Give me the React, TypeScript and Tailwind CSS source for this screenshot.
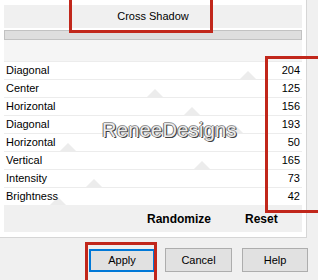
import React from "react";

const rows = [
  { label: "Diagonal", value: 204 },
  { label: "Center", value: 125 },
  { label: "Horizontal", value: 156 },
  { label: "Diagonal", value: 193 },
  { label: "Horizontal", value: 50 },
  { label: "Vertical", value: 165 },
  { label: "Intensity", value: 73 },
  { label: "Brightness", value: 42 },
];

const Thumb = ({ value }: { value: number }) => {
  // faint slider thumb behind each row
  const left = 9 + value * 1.17 - 4 - 8;
  return (
    <svg className="absolute bottom-0" style={{ left }} width="16" height="8" viewBox="0 0 16 8">
      <polygon points="0,8 8,0 16,8" fill="#ececec" />
    </svg>
  );
};

const App = () => {
  return (
    <div className="relative w-[318px] h-[280px] overflow-hidden bg-[#f0f0f0] text-[11px] text-black font-['Liberation_Sans',Arial,sans-serif]">
      <div className="flex">
        <div className="relative w-[307px] h-[238px] bg-white border-r border-b border-[#d6d6d6] px-[4px] pt-[5px]">
          <div className="h-[23px] bg-[#f0f0f0] flex items-center justify-center">Cross Shadow</div>
          <div className="mt-[2px] h-[10px] bg-[#dedede] border border-[#c2c2c2]" />
          <div className="h-[21px] bg-[#f5f5f5]" />
          <div>
            {rows.map((row, index) => (
              <div key={index} className="relative h-[18px] border-t border-[#ececec] bg-white flex items-center justify-between px-[2px]">
                <Thumb value={row.value} />
                <span className="relative">{row.label}</span>
                <span className="relative">{row.value}</span>
              </div>
            ))}
          </div>
          <div className="h-[27px] bg-[#f0f0f0] flex items-center text-[12px] font-bold">
            <span className="ml-[143px] w-[61px]">Randomize</span>
            <span className="ml-[37px]">Reset</span>
          </div>
          <div className="absolute left-[102px] top-[115px] text-[20px] tracking-[0.3px] text-[#ececec] [text-shadow:-1px_0_0_#707070,1px_1px_0_#404040,0_-1px_0_#9a9a9a,1px_0_0_#606060]">
            ReneeDesigns
          </div>
        </div>
      </div>

      <div className="flex pl-[89px] pt-[11px] gap-[10px]">
        <button className="w-[66px] h-[23px] bg-[#e1e1e1] border-2 border-[#0078d7] text-[11px]">Apply</button>
        <button className="w-[67px] h-[24px] -mt-[1px] bg-[#e1e1e1] border border-[#adadad] text-[11px]">Cancel</button>
        <button className="w-[66px] h-[24px] -mt-[1px] bg-[#e1e1e1] border border-[#adadad] text-[11px]">Help</button>
      </div>

      <div className="absolute left-[69px] -top-[3px] w-[144px] h-[36px] border-[3px] border-[#c1271b]" />
      <div className="absolute left-[265px] top-[56px] w-[60px] h-[157px] border-[3px] border-[#c1271b]" />
      <div className="absolute left-[85px] top-[242px] w-[72px] h-[45px] border-[3px] border-[#c1271b]" />
    </div>
  );
};

export default App;
